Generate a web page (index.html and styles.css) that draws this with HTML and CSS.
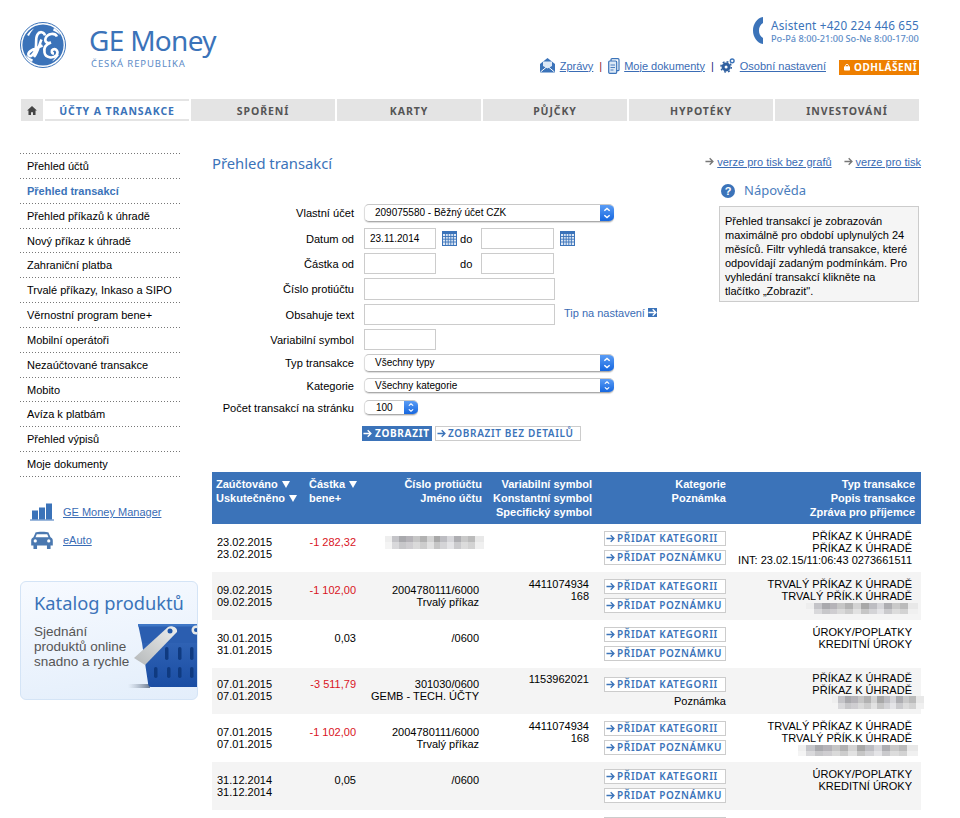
FILE: index.html
```html
<!DOCTYPE html>
<html lang="cs">
<head>
<meta charset="utf-8">
<title>GE Money - Přehled transakcí</title>
<link rel="stylesheet" href="styles.css">
</head>
<body>
<svg class="defs" width="0" height="0" aria-hidden="true">
  <symbol id="arr" viewBox="0 0 10 10"><path d="M0.5 5H8.5M5.2 1.5L8.8 5L5.2 8.5" fill="none" stroke="currentColor" stroke-width="1.5"/></symbol>
  <symbol id="cal" viewBox="0 0 15 15"><rect width="15" height="15" fill="#3b73b9"/><rect x="1" y="3" width="13" height="11" fill="#dfe9f6"/><path d="M1 5.5H14M1 8.2H14M1 11H14M3.6 3V14M6.2 3V14M8.8 3V14M11.4 3V14" stroke="#3b73b9" stroke-width="0.9"/></symbol>
  <symbol id="cap" viewBox="0 0 14 18"><path d="M4 6.5L7 3.8L10 6.5M4 11.5L7 14.2L10 11.5" fill="none" stroke="#fff" stroke-width="1.6"/></symbol>
</svg>
<header class="header">
  <div class="brand">
    <svg class="logo" viewBox="0 0 46 46" role="img" aria-label="GE">
      <circle cx="23" cy="23" r="22.5" fill="#fff" stroke="#3b73b9" stroke-width="1"/>
      <circle cx="23" cy="23" r="20.6" fill="#3b73b9"/>
      <path d="M7 13C9 10 11 8 14 6.5C12 9 10 11 9 14ZM39 33C37 36 35 38 32 39.500C34 37 36 35 37 32ZM34 6C37 8 39 10 40.500 13C38 11 36 10 33 8.500ZM12 40C9 38 7 36 5.500 33C8 35 10 36 13 37.500Z" fill="#fff"/>
      <path d="M25 13.500C24 9.500 19.500 9 17.500 12.500C15 16.500 17 21 15.500 27C14 32.500 10 36 8.500 33C7.500 30.500 12 27.500 16.500 26L22.500 23.500M21.500 17.500C19.500 21.500 18 30 14 35" fill="none" stroke="#fff" stroke-width="2.600"/>
      <path d="M37 14.500C35 10.500 27.500 11 25.500 16.500C24.500 20 27.500 22 31 20.500C26.500 22 23.500 25.500 24.500 30.500C25.500 36 33 37 36.500 33C39 30 36 26 33 27.500C31 28.500 31.500 31.500 34 31.500" fill="none" stroke="#fff" stroke-width="2.600"/>
    </svg>
    <div class="brand-text">
      <div class="brand-name">GE Money</div>
      <div class="brand-sub">ČESKÁ REPUBLIKA</div>
    </div>
  </div>
  <div class="head-right">
    <div class="assist">
      <svg class="phone" viewBox="0 0 10 27" aria-hidden="true"><path d="M10 0C4 1 0 7 0 13.500C0 20 4 26 10 27L10 21C7 19 6 16.500 6 13.500C6 10.500 7 8 10 6Z" fill="#3b73b9"/></svg>
      <div>
        <div class="assist-tel">Asistent +420 224 446 655</div>
        <div class="assist-hours">Po-Pá 8:00-21:00 So-Ne 8:00-17:00</div>
      </div>
    </div>
    <div class="toplinks">
      <svg class="ico-mail" viewBox="0 0 15 15" aria-hidden="true"><path d="M7.500 0L15 6V14.500H0V6Z" fill="#3b73b9"/><path d="M3 3.500H12V8L7.500 10.500L3 8Z" fill="#dce8f6"/><path d="M0.500 14L6.500 9M14.500 14L8.500 9" stroke="#fff" stroke-width="1"/></svg>
      <a class="link" href="#">Zprávy</a>
      <span class="sep sep-red">|</span>
      <svg class="ico-doc" viewBox="0 0 12 16" aria-hidden="true"><rect x="3" y="0.700" width="8" height="12" rx="1" fill="#fff" stroke="#3b73b9" stroke-width="1.200"/><rect x="0.700" y="3" width="8" height="12.300" rx="1" fill="#dce8f6" stroke="#3b73b9" stroke-width="1.200"/><path d="M2.500 7H7M2.500 9.500H7M2.500 12H5.500" stroke="#3b73b9" stroke-width="0.900"/></svg>
      <a class="link" href="#">Moje dokumenty</a>
      <span class="sep sep-navy">|</span>
      <svg class="ico-gear" viewBox="0 0 16 16" aria-hidden="true"><circle cx="6.500" cy="9.500" r="3.200" fill="none" stroke="#2f5f9f" stroke-width="3.200"/><circle cx="6.500" cy="9.500" r="5.500" fill="none" stroke="#2f5f9f" stroke-width="1.600" stroke-dasharray="2 2.300"/><circle cx="13" cy="3" r="2" fill="none" stroke="#3b73b9" stroke-width="1.500"/></svg>
      <a class="link" href="#">Osobní nastavení</a>
      <a class="logout" href="#"><svg class="ico-lock" viewBox="0 0 8 9" aria-hidden="true"><rect y="3.500" width="8" height="5.500" rx="1" fill="#fff"/><path d="M2 4V2.500C2 .500 6 .500 6 2.500V4" fill="none" stroke="#fff" stroke-width="1.100"/></svg>ODHLÁŠENÍ</a>
    </div>
  </div>
</header>

<nav class="nav">
  <a class="nav-home" href="#" aria-label="Domů"><svg viewBox="0 0 12 11" aria-hidden="true"><path d="M6 0L12 5.500H10.300V11H7.200V7.500H4.800V11H1.700V5.500H0Z" fill="#444"/></svg></a>
  <a class="nav-item nav-active" href="#">ÚČTY A TRANSAKCE</a>
  <a class="nav-item" href="#">SPOŘENÍ</a>
  <a class="nav-item" href="#">KARTY</a>
  <a class="nav-item" href="#">PŮJČKY</a>
  <a class="nav-item" href="#">HYPOTÉKY</a>
  <a class="nav-item" href="#">INVESTOVÁNÍ</a>
</nav>

<div class="layout">
  <aside class="side">
    <ul class="menu">
      <li><a href="#">Přehled účtů</a></li>
      <li><a class="current" href="#">Přehled transakcí</a></li>
      <li><a href="#">Přehled příkazů k úhradě</a></li>
      <li><a href="#">Nový příkaz k úhradě</a></li>
      <li><a href="#">Zahraniční platba</a></li>
      <li><a href="#">Trvalé příkazy, Inkaso a SIPO</a></li>
      <li><a href="#">Věrnostní program bene+</a></li>
      <li><a href="#">Mobilní operátoři</a></li>
      <li><a href="#">Nezaúčtované transakce</a></li>
      <li><a href="#">Mobito</a></li>
      <li><a href="#">Avíza k platbám</a></li>
      <li><a href="#">Přehled výpisů</a></li>
      <li><a href="#">Moje dokumenty</a></li>
    </ul>
    <div class="tool tool-first">
      <svg class="tool-ico" viewBox="0 0 24 17" aria-hidden="true"><rect x="2" y="7" width="6" height="9" fill="#3b73b9"/><rect x="9" y="4" width="6" height="12" fill="#3b73b9"/><rect x="16" y="0" width="6" height="16" fill="#3b73b9"/><rect y="16" width="24" height="1" fill="#3b73b9"/></svg>
      <a class="link" href="#">GE Money Manager</a>
    </div>
    <div class="tool tool-second">
      <svg class="tool-ico" viewBox="0 0 24 20" aria-hidden="true"><path d="M5 1.500C6 .500 18 .500 19 1.500L21.500 7C23.500 8 24 9 24 11V16H21.500V20H17.500V16H6.500V20H2.500V16H0V11C0 9 .500 8 2.500 7ZM6.200 3.500L4.800 7H19.200L17.800 3.500Z" fill="#4a78b0" fill-rule="evenodd"/><circle cx="4.500" cy="11" r="1.800" fill="#fff"/><circle cx="19.500" cy="11" r="1.800" fill="#fff"/></svg>
      <a class="link" href="#">eAuto</a>
    </div>
    <div class="promo">
      <div class="promo-title">Katalog produktů</div>
      <div class="promo-text">Sjednání<br>produktů online<br>snadno a rychle</div>
      <svg class="basket" viewBox="0 0 64 68" aria-hidden="true">
        <defs>
          <linearGradient id="bk" x1="0" y1="0" x2="0" y2="1"><stop offset="0" stop-color="#2f62b4"/><stop offset="1" stop-color="#1a4da3"/></linearGradient>
          <linearGradient id="hd" x1="0" y1="1" x2="1" y2="0"><stop offset="0" stop-color="#b5b8b9"/><stop offset="1" stop-color="#eceeee"/></linearGradient>
          <linearGradient id="sh" x1="0" y1="0" x2="1" y2="0"><stop offset="0" stop-color="#99a4b3" stop-opacity="0"/><stop offset="1" stop-color="#6c7b90"/></linearGradient>
        </defs>
        <rect x="-6" y="61" width="22" height="4" fill="url(#sh)"/>
        <path d="M8 20H64V64H17C15 64 14 62 14 60Z" fill="url(#bk)"/>
        <path d="M4 1H64V20H8Z" fill="#2b5eb0"/>
        <path d="M4 1H64V3.500H4Z" fill="#3f77c6"/>
        <g fill="#0f3a80"><rect x="31" y="24" width="3.500" height="13" rx="1.700"/><rect x="44" y="24" width="3.500" height="13" rx="1.700"/><rect x="56" y="24" width="3.500" height="13" rx="1.700"/><rect x="20" y="44" width="3.500" height="11" rx="1.700"/><rect x="33" y="44" width="3.500" height="11" rx="1.700"/><rect x="44" y="44" width="3.500" height="11" rx="1.700"/><rect x="56" y="44" width="3.500" height="11" rx="1.700"/></g>
        <path d="M0 35L34 4C37 2 44 4 43 9L11 42Z" fill="url(#hd)"/>
        <circle cx="36" cy="8" r="2.500" fill="#1f56a8"/>
        <circle cx="62" cy="7" r="4.500" fill="#e6e8e8"/><circle cx="62" cy="7" r="2" fill="#1f56a8"/>
      </svg>
    </div>
  </aside>

  <main class="main">
    <div class="title-row">
      <h1 class="title">Přehled transakcí</h1>
      <div class="print">
        <svg class="print-arr" aria-hidden="true"><use href="#arr"/></svg><a class="link" href="#">verze pro tisk bez grafů</a>
        <svg class="print-arr print-arr2" aria-hidden="true"><use href="#arr"/></svg><a class="link" href="#">verze pro tisk</a>
      </div>
    </div>
    <div class="upper">
      <form class="filter">
        <div class="frow r-a"><label>Vlastní účet</label><div class="sel sel-wide sel-big"><span>209075580 - Běžný účet CZK</span><b><svg aria-hidden="true"><use href="#cap"/></svg></b></div></div>
        <div class="frow r-b"><label>Datum od</label><input class="in in-s" type="text" value="23.11.2014"><svg class="cal" aria-hidden="true"><use href="#cal"/></svg><span class="do do-t">do</span><input class="in in-s2" type="text"><svg class="cal" aria-hidden="true"><use href="#cal"/></svg></div>
        <div class="frow r-b"><label>Částka od</label><input class="in in-s" type="text"><span class="do do-p">do</span><input class="in in-s2" type="text"></div>
        <div class="frow r-c"><label>Číslo protiúčtu</label><input class="in in-l" type="text"></div>
        <div class="frow r-b"><label>Obsahuje text</label><input class="in in-l" type="text"><a class="tip" href="#">Tip na nastavení<span class="tip-ico"><svg aria-hidden="true"><use href="#arr"/></svg></span></a></div>
        <div class="frow r-b"><label>Variabilní symbol</label><input class="in in-s" type="text"></div>
        <div class="frow r-a"><label>Typ transakce</label><div class="sel sel-wide sel-big"><span>Všechny typy</span><b><svg aria-hidden="true"><use href="#cap"/></svg></b></div></div>
        <div class="frow r-d"><label>Kategorie</label><div class="sel sel-wide sel-small"><span>Všechny kategorie</span><b><svg aria-hidden="true"><use href="#cap"/></svg></b></div></div>
        <div class="frow r-e"><label>Počet transakcí na stránku</label><div class="sel sel-num sel-small"><span>100</span><b><svg aria-hidden="true"><use href="#cap"/></svg></b></div></div>
        <div class="actions">
          <a class="go" href="#"><svg aria-hidden="true"><use href="#arr"/></svg>ZOBRAZIT</a>
          <a class="btn btn-long" href="#"><svg aria-hidden="true"><use href="#arr"/></svg>ZOBRAZIT BEZ DETAILŮ</a>
        </div>
      </form>
      <aside class="help">
        <h2 class="help-title"><span class="help-q">?</span>Nápověda</h2>
        <p class="help-box">Přehled transakcí je zobrazován maximálně pro období uplynulých 24 měsíců. Filtr vyhledá transakce, které odpovídají zadaným podmínkám. Pro vyhledání transakcí klikněte na tlačítko „Zobrazit".</p>
      </aside>
    </div>

    <table class="tx">
      <colgroup><col class="c1"><col class="c2"><col class="c3"><col class="c4"><col class="c5"><col class="c6"></colgroup>
      <thead>
        <tr>
          <th class="l1">Zaúčtováno <i class="tri"></i><br>Uskutečněno <i class="tri"></i></th>
          <th class="l2">Částka <i class="tri"></i><br>bene+</th>
          <th>Číslo protiúčtu<br>Jméno účtu</th>
          <th>Variabilní symbol<br>Konstantní symbol<br>Specifický symbol</th>
          <th>Kategorie<br>Poznámka</th>
          <th class="r6">Typ transakce<br>Popis transakce<br>Zpráva pro příjemce</th>
        </tr>
      </thead>
      <tbody>
        <tr>
          <td class="date">23.02.2015<br>23.02.2015</td><td class="amt neg">-1 282,32</td>
          <td class="acc"><span class="blur b-acc"></span></td><td class="var"></td>
          <td class="cat"><a class="btn" href="#"><svg aria-hidden="true"><use href="#arr"/></svg>PŘIDAT KATEGORII</a><a class="btn" href="#"><svg aria-hidden="true"><use href="#arr"/></svg>PŘIDAT POZNÁMKU</a></td>
          <td class="typ">PŘÍKAZ K ÚHRADĚ<br>PŘÍKAZ K ÚHRADĚ<br>INT: 23.02.15/11:06:43 0273661511</td>
        </tr>
        <tr class="alt">
          <td class="date">09.02.2015<br>09.02.2015</td><td class="amt neg">-1 102,00</td>
          <td class="acc">2004780111/6000<br>Trvalý příkaz</td><td class="var">4411074934<br>168</td>
          <td class="cat"><a class="btn" href="#"><svg aria-hidden="true"><use href="#arr"/></svg>PŘIDAT KATEGORII</a><a class="btn" href="#"><svg aria-hidden="true"><use href="#arr"/></svg>PŘIDAT POZNÁMKU</a></td>
          <td class="typ">TRVALÝ PŘÍKAZ K ÚHRADĚ<br>TRVALÝ PŘÍK.K ÚHRADĚ<span class="blur b-typ"></span></td>
        </tr>
        <tr>
          <td class="date">30.01.2015<br>31.01.2015</td><td class="amt">0,03</td>
          <td class="acc">/0600</td><td class="var"></td>
          <td class="cat"><a class="btn" href="#"><svg aria-hidden="true"><use href="#arr"/></svg>PŘIDAT KATEGORII</a><a class="btn" href="#"><svg aria-hidden="true"><use href="#arr"/></svg>PŘIDAT POZNÁMKU</a></td>
          <td class="typ">ÚROKY/POPLATKY<br>KREDITNÍ ÚROKY</td>
        </tr>
        <tr class="alt short">
          <td class="date">07.01.2015<br>07.01.2015</td><td class="amt neg">-3 511,79</td>
          <td class="acc">301030/0600<br>GEMB - TECH. ÚČTY</td><td class="var">1153962021</td>
          <td class="cat"><a class="btn" href="#"><svg aria-hidden="true"><use href="#arr"/></svg>PŘIDAT KATEGORII</a><div class="note">Poznámka</div></td>
          <td class="typ">PŘÍKAZ K ÚHRADĚ<br>PŘÍKAZ K ÚHRADĚ<span class="blur b-short"></span></td>
        </tr>
        <tr>
          <td class="date">07.01.2015<br>07.01.2015</td><td class="amt neg">-1 102,00</td>
          <td class="acc">2004780111/6000<br>Trvalý příkaz</td><td class="var">4411074934<br>168</td>
          <td class="cat"><a class="btn" href="#"><svg aria-hidden="true"><use href="#arr"/></svg>PŘIDAT KATEGORII</a><a class="btn" href="#"><svg aria-hidden="true"><use href="#arr"/></svg>PŘIDAT POZNÁMKU</a></td>
          <td class="typ">TRVALÝ PŘÍKAZ K ÚHRADĚ<br>TRVALÝ PŘÍK.K ÚHRADĚ<span class="blur b-long"></span></td>
        </tr>
        <tr class="alt">
          <td class="date">31.12.2014<br>31.12.2014</td><td class="amt">0,05</td>
          <td class="acc">/0600</td><td class="var"></td>
          <td class="cat"><a class="btn" href="#"><svg aria-hidden="true"><use href="#arr"/></svg>PŘIDAT KATEGORII</a><a class="btn" href="#"><svg aria-hidden="true"><use href="#arr"/></svg>PŘIDAT POZNÁMKU</a></td>
          <td class="typ">ÚROKY/POPLATKY<br>KREDITNÍ ÚROKY</td>
        </tr>
      </tbody>
    </table>
    <div class="next-row"></div>
  </main>
</div>
</body>
</html>
```
FILE: styles.css
```css
* { box-sizing: border-box; }
html, body { margin: 0; padding: 0; height: 818px; overflow: hidden; background: #fff; }
body { width: 960px; font: 12px/14px "Liberation Sans", Arial, sans-serif; color: #000; }
a { text-decoration: none; color: inherit; }
.defs { position: absolute; }
.link { color: #3a6cb5; text-decoration: underline; }

/* header */
.header { display: flex; justify-content: space-between; height: 99px; padding: 0 41px 0 20px; }
.brand { display: flex; align-items: flex-start; }
.logo { width: 46px; height: 46px; margin-top: 21.500px; flex: none; }
.brand-text { margin-left: 23px; margin-top: 24px; color: #3b73b9; }
.brand-name { font: 400 28px/32px "Noto Sans", sans-serif; letter-spacing: -0.700px; }
.brand-sub { font: 400 9.500px/12px "Noto Sans", sans-serif; letter-spacing: 0.900px; margin: 2px 0 0 2px; color: #5d8cc7; }
.head-right { display: flex; flex-direction: column; align-items: flex-end; }
.assist { display: flex; gap: 8px; margin-top: 17px; color: #3b73b9; }
.phone { width: 10px; height: 27px; flex: none; }
.assist-tel { font: 400 11.700px/14px "Noto Sans", sans-serif; letter-spacing: 0.200px; margin-top: 1px; }
.assist-hours { font: 500 9.200px/14px "Noto Sans", sans-serif; color: #5d8cc7; }
.toplinks { display: flex; align-items: center; margin-top: 11px; font-size: 11px; height: 17px; }
.ico-mail { width: 15px; height: 15px; margin-right: 5px; }
.ico-doc { width: 12px; height: 16px; margin-right: 4px; }
.ico-gear { width: 15px; height: 15px; margin-right: 5px; }
.sep { margin: 0 6px; }
.sep-red { color: #8b1f2e; }
.sep-navy { color: #2c2a80; }
.logout { display: flex; align-items: center; height: 15px; width: 80px; margin: 3px 0 0 13px; padding-left: 5px; background: #ee7f00; color: #fff; font: 700 10px/15px "Noto Sans", sans-serif; letter-spacing: 0.500px; }
.ico-lock { width: 6px; height: 8px; margin-right: 4px; }

/* nav */
.nav { display: flex; gap: 2px; height: 22px; margin-left: 21px; width: 898px; }
.nav-home { width: 22px; background: #e4e4e4; display: flex; align-items: center; justify-content: center; }
.nav-home svg { width: 10px; height: 9px; }
.nav-item { width: 144px; background: #e4e4e4; color: #555; text-align: center; padding-top: 1px; font: 700 10.500px/22px "Noto Sans", sans-serif; letter-spacing: 0.900px; }
.nav-active { background: #fff; color: #3b73b9; border-top: 2px solid #e4e4e4; border-bottom: 2px solid #e4e4e4; padding-top: 0; line-height: 20px; }

/* layout */
.layout { display: flex; margin-top: 32px; padding-left: 20px; }
.side { width: 178px; flex: none; margin-right: 14px; }
.menu { list-style: none; margin: 0; padding: 1px 0 0; width: 161px; background: linear-gradient(90deg, #777 1px, transparent 1px) left top / 3px 1px repeat-x; }
.menu li { height: 24.850px; padding-left: 7px; line-height: 24px; font-size: 11px; background: linear-gradient(90deg, #777 1px, transparent 1px) left bottom / 3px 1px repeat-x; }
.current { color: #3b73b9; font-weight: 700; }
.tool { display: flex; align-items: center; font-size: 11px; }
.tool-first { margin-top: 26px; height: 18px; }
.tool-second { margin-top: 9px; height: 20px; }
.tool-ico { width: 24px; height: 18px; margin: 0 9px 0 10px; flex: none; }
.promo { position: relative; overflow: hidden; height: 119px; margin-top: 31px; border: 1px solid #d4e4f6; border-radius: 6px; background: linear-gradient(170deg, #f7faff, #e3eefb); }
.promo-title { font: 400 18.300px/24px "Noto Sans", sans-serif; color: #3b73b9; margin: 9px 0 0 13px; white-space: nowrap; }
.promo-text { font-size: 13.500px; line-height: 15px; color: #555; margin: 9px 0 0 13px; }
.basket { position: absolute; left: 113px; top: 41px; width: 64px; height: 68px; overflow: visible; }

/* main */
.main { width: 709px; flex: none; }
.title-row { display: flex; justify-content: space-between; align-items: center; height: 22px; }
.title { margin: -2px 0 0; font: 400 14.800px/22px "Noto Sans", sans-serif; color: #3b73b9; }
.print { display: flex; align-items: center; font-size: 11px; margin-top: -5px; }
.print-arr { width: 9px; height: 9px; color: #777; margin-right: 3px; }
.print-arr2 { margin-left: 12px; }
.upper { display: flex; }
.filter { width: 507px; flex: none; padding-top: 29px; }
.frow { display: flex; align-items: center; margin-bottom: 4px; }
.frow label { width: 142px; text-align: right; margin-right: 10px; flex: none; font-size: 11.100px; white-space: nowrap; }
.r-a { height: 18px; margin-bottom: 6px; }
.r-b { height: 21px; }
.r-c { height: 22px; }
.r-d { height: 15px; margin-bottom: 7px; }
.r-e { height: 15px; margin-bottom: 11px; }
.in { height: 100%; border: 1px solid #ccc; background: #fff; font: 10px "Liberation Sans", sans-serif; padding: 0 5px; margin: 0; outline: 0; border-radius: 0; }
.in-s { width: 72px; }
.in-s2 { width: 73px; }
.in-l { width: 191px; }
.cal { width: 15px; height: 15px; margin-left: 6px; flex: none; }
.do { font-size: 11.100px; width: 12px; }
.do-t { margin: 0 9px 0 3px; }
.do-p { margin: 0 9px 0 24px; }
.tip { color: #3a6cb5; display: flex; align-items: center; margin: -4px 0 0 9px; font-size: 11px; }
.tip-ico { width: 9px; height: 9px; margin-left: 3px; background: #3b73b9; color: #fff; display: block; }
.tip-ico svg { width: 9px; height: 9px; display: block; }
.sel { display: flex; align-items: center; height: 100%; border-radius: 5px; background: #fff; border-top: 1px solid #c8c8c8; border-left: 1px solid #ddd; border-bottom: 1px solid #aaa; overflow: hidden; font-size: 10px; box-shadow: 0 1px 1px #ddd; }
.sel span { flex: 1; padding-left: 10px; }
.sel b { width: 14px; height: 100%; background: linear-gradient(#5a9cf5, #1667df); display: block; flex: none; }
.sel svg { width: 14px; height: 100%; display: block; }
.sel-wide { width: 250px; }
.sel-num { width: 54px; }
.sel-num span { padding-left: 11px; }
.actions { display: flex; margin-left: 150px; gap: 3px; }
.go { display: flex; align-items: center; width: 70px; height: 15px; background: #3b73b9; color: #fff; font: 700 10px/15px "Noto Sans", sans-serif; letter-spacing: 0.700px; padding-left: 1px; }
.go svg { width: 9px; height: 9px; margin-right: 3px; }
.btn { display: flex; align-items: center; width: 122px; height: 15px; border: 1px solid #ccc; color: #3b73b9; background: #fff; font: 600 10px/13px "Noto Sans", sans-serif; letter-spacing: 0.650px; padding-left: 1px; white-space: nowrap; }
.btn svg { width: 9px; height: 9px; margin-right: 2px; flex: none; }
.btn-long { width: 146px; }
.help { width: 202px; padding-left: 0; }
.help-title { display: flex; align-items: center; margin: 6px 0 6px 2px; height: 19px; font: 400 13px/19px "Noto Sans", sans-serif; color: #4a7dbd; }
.help-q { width: 14px; height: 14px; margin-right: 9px; border-radius: 50%; background: #3b73b9; color: #fff; font: 700 11px/14px "Liberation Sans", sans-serif; text-align: center; }
.help-box { width: 200px; height: 96px; margin: 0; padding: 7px 5px; background: #f5f5f5; border: 1px solid #ccc; font-size: 11px; line-height: 14px; }

/* table */
.tx { width: 709px; table-layout: fixed; border-collapse: collapse; margin-top: 31px; }
.c1 { width: 88px; } .c2 { width: 60px; } .c3 { width: 126px; } .c4 { width: 110px; } .c5 { width: 134px; } .c6 { width: 191px; }
.tx th { background: #3b73b9; color: #fff; font-size: 11px; line-height: 14px; height: 52px; padding: 5px 4px 0 0; vertical-align: top; text-align: right; }
.tx th.l1 { text-align: left; padding-left: 4px; white-space: nowrap; }
.tx th.l2 { text-align: left; padding-left: 9px; white-space: nowrap; }
.tx th.r6 { padding-right: 6px; }
.tri { display: inline-block; width: 0; height: 0; border-left: 4px solid transparent; border-right: 4px solid transparent; border-top: 7px solid #fff; margin-left: 1px; }
.tx td { height: 48px; padding: 0; vertical-align: top; line-height: 12px; font-size: 11px; text-align: right; }
.alt td { background: #f4f4f4; }
.tx td.date { text-align: left; padding: 12px 0 0 5px; }
.tx td.amt { padding: 12px 4px 0 0; }
.neg { color: #d9141e; }
.tx td.acc { padding: 12px 7px 0 0; }
.tx td.var { padding: 6px 7px 0 0; }
.tx td.cat { padding: 7px 4px 0 0; }
.cat .btn { margin: 0 0 4px auto; }
.tx td.typ { padding: 6px 9px 0 0; white-space: nowrap; }
.note { line-height: 14px; margin-top: -2px; }
.tx .short td { height: 46px; }
.tx .short td.date, .tx .short td.amt, .tx .short td.acc { padding-top: 10px; }
.tx .short td.var { padding-top: 5px; }
.tx .short td.cat { padding-top: 9px; }
.tx .short td.typ { padding-top: 4px; }
.blur { display: block; margin-left: auto; height: 11px;
  background:
    linear-gradient(rgba(255,255,255,0) 50%, rgba(255,255,255,.35) 50%),
    linear-gradient(90deg, #eee 0 7%, #c4c4c8 7% 14%, #a9a9ad 14% 21%, #b5b3b8 21% 28%, #c6c6c6 28% 35%, #b2b2b2 35% 42%, #d3d3d3 42% 49%, #a8a8a8 49% 56%, #bdbdc2 56% 63%, #d6d6da 63% 70%, #aeaeb2 70% 77%, #c9c9c9 77% 84%, #bbb 84% 91%, #e8e8e8 91% 100%);
}
.b-acc { width: 99px; height: 13px; margin-right: -5px; }
.b-typ { width: 112px; margin-right: -6px; margin-top: 1px; }
.b-short { width: 92px; height: 13px; margin-right: -12px; }
.b-long { width: 120px; margin-right: -6px; margin-top: 1px; }
.next-row { margin: 7px 0 0 392px; width: 122px; height: 1px; background: #ccc; }
```
